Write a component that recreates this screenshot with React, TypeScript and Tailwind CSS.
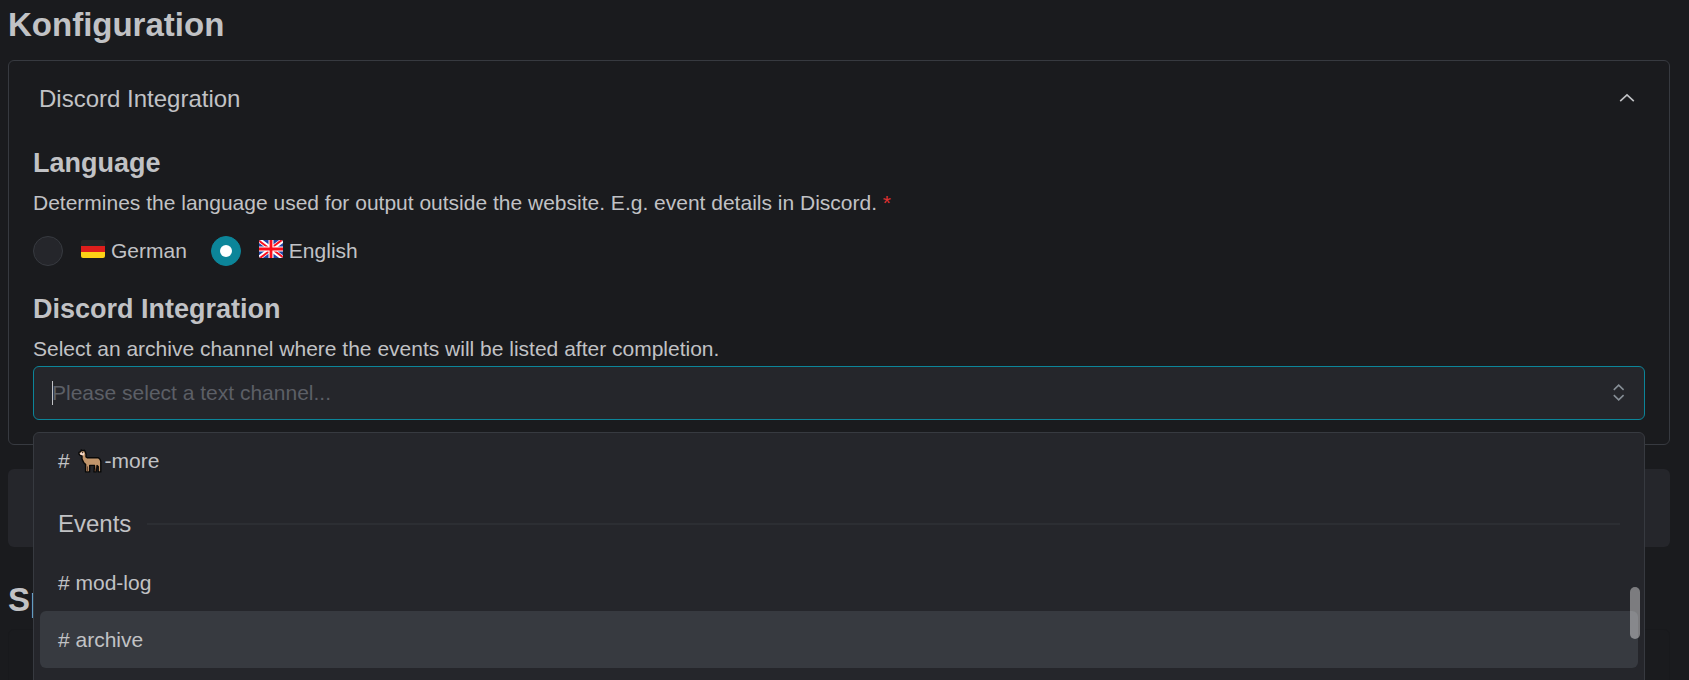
import { useState } from "react";

function GermanFlag() {
  return (
    <svg viewBox="0 0 24 18" className="h-[18px] w-6" aria-hidden="true">
      <clipPath id="de-clip">
        <rect width="24" height="18" rx="2" />
      </clipPath>
      <g clipPath="url(#de-clip)">
        <rect width="24" height="6" fill="#262626" />
        <rect y="6" width="24" height="6" fill="#e01e1b" />
        <rect y="12" width="24" height="6" fill="#fdd116" />
      </g>
    </svg>
  );
}

function BritishFlag() {
  return (
    <svg viewBox="0 0 24 18" className="h-[18px] w-6" aria-hidden="true">
      <clipPath id="gb-clip">
        <rect width="24" height="18" rx="2" />
      </clipPath>
      <g clipPath="url(#gb-clip)">
        <rect width="24" height="18" fill="#2444a4" />
        <path d="M0 0L24 18M24 0L0 18" stroke="#fff" strokeWidth="4.6" />
        <path d="M-1 0L11 9M25 18L13 9M24 -0.8L12 8.2M0 18.8L12 9.8" stroke="#fb1020" strokeWidth="2" />
        <path d="M12 0V18M0 9H24" stroke="#fff" strokeWidth="5" />
        <path d="M12 0V18M0 9H24" stroke="#fb0d1b" strokeWidth="2.8" />
      </g>
    </svg>
  );
}

function Llama() {
  return (
    <svg viewBox="0 0 24 24" className="h-6 w-6" role="img" aria-label="llama">
      <path
        d="M1 3.4L2.8 2.6L3.2 0.9L4.6 1.6L6.4 1.2L7.3 2.8L8 5V8L9.4 8.8H20.4L22.2 10.4L22.8 12.6V22.9H20.2V17.6L19 16.6L18 22.9H16L16.5 16.4H11.7L11.6 22.9H7.6V15.5L5.6 13.4L4 10V6.7L2 6.4L1 5Z"
        fill="#c1956b"
        stroke="#080808"
        strokeWidth="1.4"
        strokeLinejoin="round"
      />
      <path d="M9.5 17.4V22.3M18.3 17L17.3 22.3" stroke="#54311f" strokeWidth="0.8" />
      <path d="M1.7 4.2L4.2 3L6.4 4.2L5.6 6.4L2.8 6Z" fill="#f5d9ca" />
      <rect x="4" y="3.2" width="1" height="1" fill="#16100c" />
    </svg>
  );
}

const radioClass =
  "grid h-[30px] w-[30px] shrink-0 appearance-none place-items-center rounded-full border border-[#373a40] bg-[#25262b] before:h-3 before:w-3 before:rounded-full checked:border-[#0c8599] checked:bg-[#0c8599] checked:before:bg-white";

function LanguageRadio(props: {
  id: string;
  label: string;
  flag: React.ReactNode;
  checked: boolean;
  onSelect: () => void;
}) {
  return (
    <div className="flex items-center">
      <input
        type="radio"
        name="language"
        id={props.id}
        checked={props.checked}
        onChange={props.onSelect}
        className={radioClass}
      />
      <label htmlFor={props.id} className="flex items-center gap-1.5 pl-[18px] leading-[30px]">
        <span className="pb-1">{props.flag}</span>
        {props.label}
      </label>
    </div>
  );
}

function ChannelOption({ children, active = false }: { children: React.ReactNode; active?: boolean }) {
  return (
    <li role="option" aria-selected={active}>
      <button
        type="button"
        className={
          active
            ? "flex w-full items-center rounded-md bg-[#373a40] px-[18px] py-3 text-left"
            : "flex w-full items-center rounded-md px-[18px] py-3 text-left"
        }
      >
        {children}
      </button>
    </li>
  );
}

export default function App() {
  const [language, setLanguage] = useState("en");
  const [channel, setChannel] = useState("");

  return (
    <main className="h-screen overflow-hidden bg-[#1a1b1e] pt-1 pr-[19px] pl-2 font-['Liberation_Sans',Arial,sans-serif] text-[21px] leading-[33px] text-[#c1c2c5]">
      <h1 className="text-[33px] leading-[42px] font-bold">Konfiguration</h1>

      <section className="mt-[14px] rounded-md border border-[#373a40]">
        <button
          type="button"
          aria-expanded="true"
          className="flex w-full items-center justify-between px-[30px] py-5 text-left text-2xl leading-9"
        >
          Discord Integration
          <svg viewBox="0 0 24 24" className="h-6 w-6" fill="none" stroke="currentColor" aria-hidden="true">
            <path d="M5.2 14.2L12 7.8L18.8 14.2" strokeWidth="1.6" />
          </svg>
        </button>

        <div className="px-6 pt-2 pb-6">
          <h2 className="text-[27px] leading-9 font-bold">Language</h2>
          <p className="mt-[5px]">
            Determines the language used for output outside the website. E.g. event details in Discord.{" "}
            <span className="text-[#e03131]">*</span>
          </p>
          <div className="mt-[17px] flex gap-6">
            <LanguageRadio
              id="lang-de"
              label="German"
              flag={<GermanFlag />}
              checked={language === "de"}
              onSelect={() => setLanguage("de")}
            />
            <LanguageRadio
              id="lang-en"
              label="English"
              flag={<BritishFlag />}
              checked={language === "en"}
              onSelect={() => setLanguage("en")}
            />
          </div>

          <h2 className="mt-[25px] text-[27px] leading-9 font-bold">Discord Integration</h2>
          <label htmlFor="channel" className="mt-[5px] block">
            Select an archive channel where the events will be listed after completion.
          </label>

          <div className="relative mt-px">
            <input
              id="channel"
              type="text"
              role="combobox"
              aria-expanded="true"
              aria-controls="channel-list"
              placeholder="Please select a text channel..."
              value={channel}
              onChange={(event) => setChannel(event.target.value)}
              className="block h-[54px] w-full rounded-md border border-[#0c8599] bg-[#25262b] pr-12 pl-[18px] caret-transparent outline-none placeholder:text-[#5c5f66] placeholder:opacity-100"
            />
            <span className="absolute top-[15px] left-[19px] h-6 w-px bg-[#c1c2c5]" />
            <svg
              viewBox="0 0 20 20"
              className="absolute top-4 right-4 h-5 w-5"
              fill="none"
              stroke="#868e96"
              strokeWidth="1.6"
              aria-hidden="true"
            >
              <path d="M4.8 7.8L9.7 3.2L14.6 7.8M4.8 13.2L9.7 17.8L14.6 13.2" />
            </svg>

            <div className="absolute top-full right-0 left-0 mt-3 h-[330px] overflow-hidden rounded-md border border-[#373a40] bg-[#25262b] px-1.5">
              <ul id="channel-list" role="listbox" aria-label="Text channels" className="-mt-px">
                <ChannelOption>
                  <span>#&nbsp;</span>
                  <span className="mr-[3px] ml-0.5">
                    <Llama />
                  </span>
                  -more
                </ChannelOption>
                <li
                  role="presentation"
                  className="flex items-center gap-4 px-[18px] pt-[17px] pb-3 text-2xl leading-9 after:h-0.5 after:flex-1 after:bg-[#2c2e33]"
                >
                  Events
                </li>
                <ChannelOption># mod-log</ChannelOption>
                <ChannelOption active># archive</ChannelOption>
              </ul>
              <div className="absolute top-[154px] right-1 h-[52px] w-2.5 rounded-full bg-white/40" />
            </div>
          </div>
        </div>
      </section>

      <div className="mt-6 h-[78px] rounded-md bg-[#25262b]" />

      <h1 className="mt-8 text-[33px] leading-[42px] font-bold">Sp</h1>
      <section className="mt-2 h-24 rounded-md border border-[#18191c]" />
    </main>
  );
}
